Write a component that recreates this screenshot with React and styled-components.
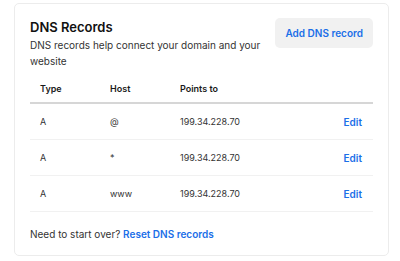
import React from 'react';
import styled, { createGlobalStyle } from 'styled-components';

const GlobalStyle = createGlobalStyle`
  body {
    margin: 0;
    background: #fff;
    font-family: Inter, "Noto Sans", sans-serif;
    color: #2b2b2b;
  }
`;

const Card = styled.div`
  box-sizing: border-box;
  width: 375px;
  margin: 3px 0 0 14px;
  padding: 14px 15px 13px;
  border: 1px solid #ececec;
  border-radius: 5px;
`;

const Header = styled.div`
  display: flex;
  justify-content: space-between;
  align-items: flex-start;
`;

const Intro = styled.div`
  width: 245px;
`;

const Title = styled.h2`
  margin: 0;
  font-size: 13px;
  line-height: 18px;
  font-weight: 600;
  color: #111;
`;

const Description = styled.p`
  margin: 1px 0 0;
  font-size: 10px;
  line-height: 16px;
  color: #333;
`;

const Button = styled.button`
  flex-shrink: 0;
  height: 30px;
  padding: 0 10px;
  border: none;
  border-radius: 5px;
  background: #f1f1f1;
  color: #1b6fe8;
  font-family: inherit;
  font-size: 10px;
  font-weight: 600;
  white-space: nowrap;
`;

const Table = styled.div`
  margin-top: 5px;
`;

const Row = styled.div`
  display: grid;
  grid-template-columns: 70px 70px 1fr auto;
  align-items: center;
  height: ${(p) => (p.$head ? '28px' : '35px')};
  border-bottom: ${(p) => (p.$head ? '2px solid #d6d6d6' : '1px solid #f1f1f1')};
  font-size: 9px;
  font-weight: ${(p) => (p.$head ? 600 : 400)};
  color: ${(p) => (p.$head ? '#1a1a1a' : '#333')};
`;

const Cell = styled.div`
  padding: 0 10px;
`;

const EditLink = styled.a`
  padding: 0 11px;
  color: #1b6fe8;
  font-size: 10px;
  font-weight: 600;
  text-decoration: none;
`;

const Footer = styled.p`
  margin: 14px 0 0;
  font-size: 10px;
  line-height: 16px;
  color: #333;
`;

const FooterLink = styled.a`
  color: #1b6fe8;
  font-weight: 600;
  text-decoration: none;
`;

const records = [
  { type: 'A', host: '@', value: '199.34.228.70' },
  { type: 'A', host: '*', value: '199.34.228.70' },
  { type: 'A', host: 'www', value: '199.34.228.70' },
];

export default function App() {
  return (
    <>
      <GlobalStyle />
      <Card>
        <Header>
          <Intro>
            <Title>DNS Records</Title>
            <Description>DNS records help connect your domain and your website</Description>
          </Intro>
          <Button>Add DNS record</Button>
        </Header>
        <Table>
          <Row $head>
            <Cell>Type</Cell>
            <Cell>Host</Cell>
            <Cell>Points to</Cell>
            <Cell />
          </Row>
          {records.map((r) => (
            <Row key={r.host}>
              <Cell>{r.type}</Cell>
              <Cell>{r.host}</Cell>
              <Cell>{r.value}</Cell>
              <EditLink href="#">Edit</EditLink>
            </Row>
          ))}
        </Table>
        <Footer>
          Need to start over? <FooterLink href="#">Reset DNS records</FooterLink>
        </Footer>
      </Card>
    </>
  );
}
